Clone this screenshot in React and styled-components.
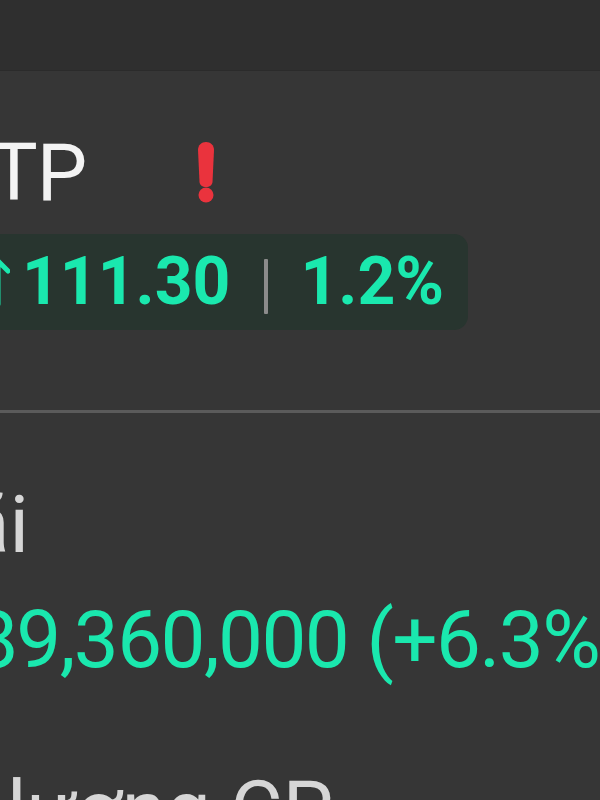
import React from "react";
import styled, { createGlobalStyle } from "styled-components";

const GlobalStyle = createGlobalStyle`
  html, body {
    margin: 0;
    padding: 0;
    background: #363636;
  }
  body {
    font-family: Roboto, "Noto Sans", "Liberation Sans", sans-serif;
  }
`;

const UP = "#1ae8ae";

const Screen = styled.div`
  width: 600px;
  height: 800px;
  overflow: hidden;
  background: #363636;
  display: flex;
  flex-direction: column;

  & > * {
    flex: none;
  }
`;

const TopBar = styled.div`
  height: 70px;
  background: #2f2f2f;
  border-bottom: 1px solid #2b2b2b;
`;

const TitleRow = styled.div`
  display: flex;
  align-items: flex-start;
  margin-top: 62px;
  height: 80px;
`;

const Ticker = styled.span`
  font-size: 80px;
  line-height: 1;
  color: #f3f3f3;
  margin-left: -60px;
  letter-spacing: -1px;
  white-space: nowrap;
`;

const Alert = styled.svg`
  flex: none;
  margin-left: 108px;
  margin-top: 9px;
`;

const PricePill = styled.div`
  align-self: flex-start;
  display: flex;
  align-items: center;
  height: 96px;
  margin-top: 21px;
  margin-left: -40px;
  padding: 0 24px 0 26px;
  border-radius: 14px;
  background: #28352f;
`;

const Arrow = styled.svg`
  flex: none;
  margin-right: 12px;
`;

const PriceText = styled.span`
  font-size: 66px;
  font-weight: 700;
  line-height: 1;
  color: ${UP};
  white-space: nowrap;
`;

const Sep = styled.span`
  flex: none;
  width: 4px;
  height: 55px;
  margin: 8px 32px 0 34px;
  background: #8b8b8b;
  border-radius: 1px;
`;

const Divider = styled.div`
  height: 3px;
  margin-top: 80px;
  background: #5b5b5b;
`;

const Label = styled.div`
  font-size: 80px;
  line-height: 1;
  color: #d6d6d6;
  white-space: nowrap;
  margin-top: ${(p) => p.$top}px;
  margin-left: ${(p) => p.$shift}px;
`;

const Value = styled.div`
  font-size: 80px;
  line-height: 1;
  letter-spacing: -1.6px;
  color: ${UP};
  white-space: nowrap;
  margin-top: 35px;
  margin-left: -27px;
`;

export default function App() {
  return (
    <>
      <GlobalStyle />
      <Screen>
        <TopBar />
        <TitleRow>
          <Ticker>VTP</Ticker>
          <Alert width="24" height="62" viewBox="0 0 24 62">
            <path
              d="M12 0 C16.5 0 20 3 20 8 L18.5 40 C18.3 43 15.5 45 12 45 C8.5 45 5.7 43 5.5 40 L4 8 C4 3 7.5 0 12 0 Z"
              fill="#ea333d"
            />
            <circle cx="12" cy="53" r="7.5" fill="#ea333d" />
          </Alert>
        </TitleRow>
        <PricePill>
          <Arrow width="24" height="48" viewBox="0 0 24 48">
            <path
              d="M2 13 L12 3 L22 13 M12 3 V46"
              fill="none"
              stroke={UP}
              strokeWidth="5"
              strokeLinecap="round"
              strokeLinejoin="round"
            />
          </Arrow>
          <PriceText>111.30</PriceText>
          <Sep />
          <PriceText>1.2%</PriceText>
        </PricePill>
        <Divider />
        <Label $top={72} $shift={-77}>Lãi</Label>
        <Value>89,360,000 (+6.3%)</Value>
        <Label $top={90} $shift={-106}>Số lượng CP</Label>
      </Screen>
    </>
  );
}
